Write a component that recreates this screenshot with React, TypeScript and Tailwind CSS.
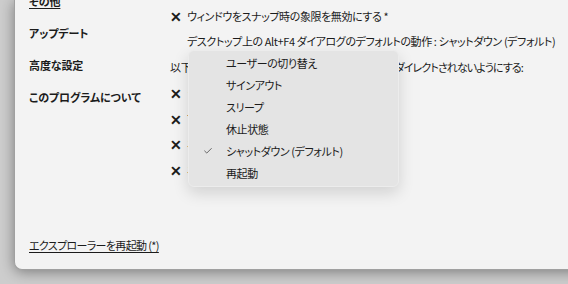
import { Check } from 'lucide-react'

const nav = ['その他', 'アップデート', '高度な設定', 'このプログラムについて']

const rows = [
  { x: true, text: 'ウィンドウをスナップ時の象限を無効にする *' },
  { x: false, text: 'デスクトップ上の Alt+F4 ダイアログのデフォルトの動作 : シャットダウン (デフォルト)' },
  { x: false, text: '以下の項目がイマーシブ コントロールパネルにリ', tail: 'ダイレクトされないようにする:' },
  { x: true, text: 'システム' },
  { x: true, text: 'プログラムと機能' },
  { x: true, text: 'ネットワークと共有センター' },
  { x: true, text: 'ネットワーク接続' },
]

const menu = ['ユーザーの切り替え', 'サインアウト', 'スリープ', '休止状態', 'シャットダウン (デフォルト)', '再起動']

export default function App() {
  return (
    <div className="w-[568px] h-[284px] overflow-hidden bg-[#cdcdcd] font-['Noto_Sans_CJK_JP',sans-serif] [font-feature-settings:'palt'] text-[#1b1b1b]">
      <div className="relative ml-[14px] w-[600px] h-[270px] bg-[#f3f3f3] rounded-bl-[8px] border-l border-b border-[#a0a0a0] shadow-[0_2px_14px_rgba(0,0,0,0.4)] flex">
        {/* left nav */}
        <div className="w-[155px] shrink-0 flex flex-col pl-[14px]">
          <div className="-mt-[15px]">
            {nav.map((n, i) => (
              <div key={n} className="h-[32px] flex items-center">
                <span className={`text-[11px] font-bold tracking-[-0.1px] ${i === 0 ? 'underline underline-offset-2' : ''}`}>{n}</span>
              </div>
            ))}
          </div>
          <div className="mt-auto pb-[14px] whitespace-nowrap">
            <span className="text-[11px] tracking-[-0.65px] underline underline-offset-2">エクスプローラーを再起動 (*)</span>
          </div>
        </div>

        {/* settings */}
        <div className="pt-[3px]">
          {rows.map((r, i) => (
            <div key={i} className="h-[25.7px] flex items-center text-[11px] tracking-[-0.4px] whitespace-nowrap">
              {r.tail ? (
                <>
                  <span className="tracking-[-0.2px]">{r.text}</span>
                  <span className="tracking-[-0.9px]">{r.tail}</span>
                </>
              ) : (
                <>
                  <span className="w-[17px] font-bold text-[14px] leading-none">{r.x ? '✕' : ''}</span>
                  <span>{r.text}</span>
                </>
              )}
            </div>
          ))}
        </div>

        {/* dropdown */}
        <div className="absolute left-[173px] top-[50px] w-[211px] h-[137px] pt-[1px] bg-[#e4e4e4] rounded-[6px] border border-[#ececec] shadow-[0_6px_16px_rgba(0,0,0,0.14)]">
          {menu.map((m, i) => (
            <div key={m} className="relative h-[22px] flex items-center pl-[37px] text-[11px] tracking-[-0.4px]">
              {i === 4 && <Check className="absolute left-[14px] w-[10px] h-[10px]" strokeWidth={1.5} />}
              {m}
            </div>
          ))}
        </div>
      </div>
    </div>
  )
}
